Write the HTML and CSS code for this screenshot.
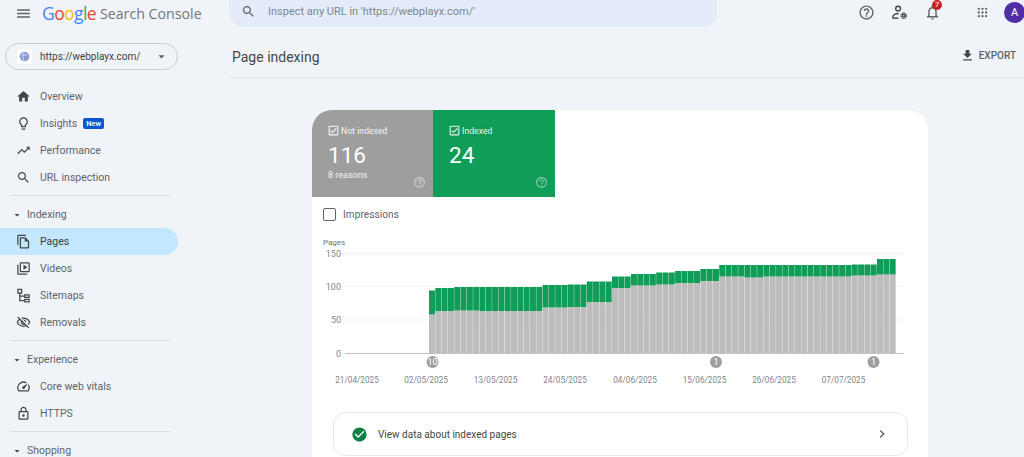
FILE: index.html
```html
<!DOCTYPE html>
<html lang="en">
<head>
    <meta charset="UTF-8">
    <meta name="viewport" content="width=device-width, initial-scale=1.0">
    <title>Page indexing - Search Console</title>
    <link rel="stylesheet" href="styles.css">
</head>
<body>
    <svg class="sprite" aria-hidden="true">
        <symbol id="i-menu" viewBox="0 0 24 24"><path d="M3 18h18v-2H3v2zm0-5h18v-2H3v2zm0-7v2h18V6H3z"/></symbol>
        <symbol id="i-search" viewBox="0 0 24 24"><path d="M15.5 14h-.79l-.28-.27C15.41 12.59 16 11.11 16 9.5 16 5.91 13.09 3 9.5 3S3 5.91 3 9.5 5.91 16 9.5 16c1.61 0 3.09-.59 4.23-1.57l.27.28v.79l5 4.99L20.49 19l-4.99-5zm-6 0C7.01 14 5 11.99 5 9.5S7.01 5 9.5 5 14 7.01 14 9.5 11.99 14 9.5 14z"/></symbol>
        <symbol id="i-help" viewBox="0 0 24 24"><path d="M11 18h2v-2h-2v2zm1-16C6.48 2 2 6.48 2 12s4.48 10 10 10 10-4.48 10-10S17.52 2 12 2zm0 18c-4.41 0-8-3.59-8-8s3.59-8 8-8 8 3.59 8 8-3.59 8-8 8zm0-14c-2.21 0-4 1.79-4 4h2c0-1.1.9-2 2-2s2 .9 2 2c0 2-3 1.75-3 5h2c0-2.25 3-2.5 3-5 0-2.21-1.79-4-4-4z"/></symbol>
        <symbol id="i-drop" viewBox="0 0 24 24"><path d="M7 10l5 5 5-5z"/></symbol>
        <symbol id="i-check" viewBox="0 0 24 24"><path d="M19 3H5c-1.1 0-2 .9-2 2v14c0 1.1.9 2 2 2h14c1.1 0 2-.9 2-2V5c0-1.1-.9-2-2-2zm0 16H5V5h14v14zM17.99 9l-1.41-1.42-6.59 6.59-2.58-2.57-1.42 1.41 4 3.99z"/></symbol>
    </svg>

    <header class="topbar">
        <div class="brand">
            <svg class="icon menu-icon"><use href="#i-menu"/></svg>
            <span class="logo"><span class="g-blue">G</span><span class="g-red">o</span><span class="g-yellow">o</span><span class="g-blue">g</span><span class="g-green">l</span><span class="g-red">e</span></span>
            <span class="product">Search Console</span>
        </div>
        <div class="searchbar">
            <svg class="icon"><use href="#i-search"/></svg>
            <span>Inspect any URL in 'https://webplayx.com/'</span>
        </div>
        <div class="top-actions">
            <svg class="icon action-icon"><use href="#i-help"/></svg>
            <svg class="icon action-icon" viewBox="0 0 24 24">
                <circle class="line" cx="10" cy="6.5" r="3.4"/>
                <path class="line" d="M2.5 20v-1.6c0-3 4.5-5 8.5-5"/>
                <path class="line" d="M2.5 20h8"/>
                <circle class="line" cx="18" cy="16.5" r="2"/>
                <circle class="gear" cx="18" cy="16.5" r="3.9"/>
            </svg>
            <div class="bell">
                <svg class="icon action-icon" viewBox="0 0 24 24"><path d="M12 22c1.1 0 2-.9 2-2h-4c0 1.1.9 2 2 2zm6-6v-5c0-3.07-1.63-5.64-4.5-6.32V4c0-.83-.67-1.5-1.5-1.5s-1.5.67-1.5 1.5v.68C7.64 5.36 6 7.92 6 11v5l-2 2v1h16v-1l-2-2zm-2 1H8v-6c0-2.48 1.51-4.5 4-4.5s4 2.02 4 4.5v6z"/></svg>
                <span class="bell-count">7</span>
            </div>
            <svg class="icon apps-icon" viewBox="0 0 24 24">
                <circle cx="4" cy="4" r="2.5"/><circle cx="12" cy="4" r="2.5"/><circle cx="20" cy="4" r="2.5"/>
                <circle cx="4" cy="12" r="2.5"/><circle cx="12" cy="12" r="2.5"/><circle cx="20" cy="12" r="2.5"/>
                <circle cx="4" cy="20" r="2.5"/><circle cx="12" cy="20" r="2.5"/><circle cx="20" cy="20" r="2.5"/>
            </svg>
            <div class="avatar">A</div>
        </div>
    </header>

    <div class="layout">
        <aside class="sidebar">
            <div class="property">
                <span class="favicon">
                    <svg viewBox="0 0 24 24"><circle class="globe" cx="12" cy="12" r="9"/><path class="globe-line" d="M12 3c-4 5-4 13 0 18M5 8c4 2 9 2 14 0"/></svg>
                </span>
                <span class="property-name">https://webplayx.com/</span>
                <svg class="icon property-caret"><use href="#i-drop"/></svg>
            </div>

            <nav>
                <a class="nav-item"><svg class="icon" viewBox="0 0 24 24"><path d="M10 20v-6h4v6h5v-8h3L12 3 2 12h3v8z"/></svg>Overview</a>
                <a class="nav-item"><svg class="icon" viewBox="0 0 24 24"><path d="M9 21c0 .55.45 1 1 1h4c.55 0 1-.45 1-1v-1H9v1zm3-19C8.14 2 5 5.14 5 9c0 2.38 1.19 4.47 3 5.74V17c0 .55.45 1 1 1h6c.55 0 1-.45 1-1v-2.26c1.81-1.27 3-3.36 3-5.74 0-3.86-3.14-7-7-7zm2.85 11.1l-.85.6V16h-4v-2.3l-.85-.6C7.8 12.16 7 10.63 7 9c0-2.76 2.24-5 5-5s5 2.24 5 5c0 1.63-.8 3.16-2.15 4.1z"/></svg>Insights<span class="new-badge">New</span></a>
                <a class="nav-item"><svg class="icon" viewBox="0 0 24 24"><path d="M16 6l2.29 2.29-4.88 4.88-4-4L2 16.59 3.41 18l6-6 4 4 6.3-6.29L22 12V6z"/></svg>Performance</a>
                <a class="nav-item"><svg class="icon"><use href="#i-search"/></svg>URL inspection</a>

                <div class="divider"></div>
                <div class="nav-group"><svg class="icon group-caret"><use href="#i-drop"/></svg>Indexing</div>
                <a class="nav-item active"><svg class="icon" viewBox="0 0 24 24"><path d="M16 1H4c-1.1 0-2 .9-2 2v14h2V3h12V1zm-1 4H8c-1.1 0-1.99.9-1.99 2L6 21c0 1.1.89 2 1.99 2H19c1.1 0 2-.9 2-2V11l-6-6zM8 21V7h6v5h5v9H8z"/></svg>Pages</a>
                <a class="nav-item"><svg class="icon" viewBox="0 0 24 24"><path d="M4 6H2v14c0 1.1.9 2 2 2h14v-2H4V6zm16-4H8c-1.1 0-2 .9-2 2v12c0 1.1.9 2 2 2h12c1.1 0 2-.9 2-2V4c0-1.1-.9-2-2-2zm0 14H8V4h12v12zM12 5.5v9l6-4.5z"/></svg>Videos</a>
                <a class="nav-item"><svg class="icon" viewBox="0 0 24 24"><path class="line" d="M3 2h6v6H3zM14 11h7v4h-7zM14 18h7v4h-7zM6 8v12h8M6 13h8"/></svg>Sitemaps</a>
                <a class="nav-item"><svg class="icon" viewBox="0 0 24 24"><path d="M12 6c3.79 0 7.17 2.13 8.82 5.5-.59 1.22-1.42 2.27-2.41 3.12l1.41 1.41c1.39-1.23 2.49-2.77 3.18-4.53C21.27 7.11 17 4 12 4c-1.27 0-2.49.2-3.64.57l1.65 1.65C10.66 6.09 11.32 6 12 6zm-1.07 1.14L13 9.21c.57.25 1.03.71 1.28 1.28l2.07 2.07c.08-.34.14-.7.14-1.07C16.5 9.01 14.48 7 12 7c-.37 0-.72.05-1.07.14zM2.01 3.87l2.68 2.68C3.06 7.83 1.77 9.53 1 11.5 2.73 15.89 7 19 12 19c1.52 0 2.98-.29 4.32-.82l3.42 3.42 1.41-1.41L3.42 2.45 2.01 3.87zm7.5 7.5l2.61 2.61c-.04.01-.08.02-.12.02-1.38 0-2.5-1.12-2.5-2.5 0-.05.01-.08.01-.13zm-3.4-3.4l1.75 1.75c-.23.55-.36 1.15-.36 1.78 0 2.48 2.02 4.5 4.5 4.5.63 0 1.23-.13 1.77-.36l.98.98c-.88.24-1.8.38-2.75.38-3.79 0-7.17-2.13-8.82-5.5.7-1.43 1.72-2.61 2.93-3.53z"/></svg>Removals</a>

                <div class="divider"></div>
                <div class="nav-group"><svg class="icon group-caret"><use href="#i-drop"/></svg>Experience</div>
                <a class="nav-item"><svg class="icon" viewBox="0 0 24 24"><path d="M20.38 8.57l-1.23 1.85a8 8 0 0 1-.22 7.58H5.07A8 8 0 0 1 15.58 6.85l1.85-1.23A10 10 0 0 0 3.35 19a2 2 0 0 0 1.72 1h13.85a2 2 0 0 0 1.74-1 10 10 0 0 0-.27-10.44zm-9.79 6.84a2 2 0 0 0 2.83 0l5.66-8.49-8.49 5.66a2 2 0 0 0 0 2.83z"/></svg>Core web vitals</a>
                <a class="nav-item"><svg class="icon" viewBox="0 0 24 24"><path d="M18 8h-1V6c0-2.76-2.24-5-5-5S7 3.24 7 6v2H6c-1.1 0-2 .9-2 2v10c0 1.1.9 2 2 2h12c1.1 0 2-.9 2-2V10c0-1.1-.9-2-2-2zM9 6c0-1.66 1.34-3 3-3s3 1.34 3 3v2H9V6zm9 14H6V10h12v10zm-6-3c1.1 0 2-.9 2-2s-.9-2-2-2-2 .9-2 2 .9 2 2 2z"/></svg>HTTPS</a>

                <div class="divider"></div>
                <div class="nav-group"><svg class="icon group-caret"><use href="#i-drop"/></svg>Shopping</div>
            </nav>
        </aside>

        <main class="content">
            <div class="page-head">
                <h1>Page indexing</h1>
                <a class="export"><svg class="icon" viewBox="0 0 24 24"><path d="M19 9h-4V3H9v6H5l7 7 7-7zM5 18v2h14v-2H5z"/></svg>EXPORT</a>
            </div>

            <section class="card">
                <div class="tabs">
                    <div class="tab tab-gray">
                        <div class="tab-label"><svg class="icon"><use href="#i-check"/></svg>Not indexed</div>
                        <div class="tab-value">116</div>
                        <div class="tab-note">8 reasons</div>
                        <svg class="icon tab-help"><use href="#i-help"/></svg>
                    </div>
                    <div class="tab tab-green">
                        <div class="tab-label"><svg class="icon"><use href="#i-check"/></svg>Indexed</div>
                        <div class="tab-value">24</div>
                        <svg class="icon tab-help"><use href="#i-help"/></svg>
                    </div>
                </div>

                <label class="impressions"><span class="checkbox"></span>Impressions</label>

                <svg class="chart" id="chart" width="616" height="162" viewBox="0 0 616 162">
                    <g class="grid">
                        <line x1="33" x2="592" y1="21.5" y2="21.5"/>
                        <line x1="33" x2="592" y1="54.5" y2="54.5"/>
                        <line x1="33" x2="592" y1="88" y2="88"/>
                    </g>
                    <line class="baseline" x1="33" x2="592" y1="121.5" y2="121.5"/>
                    <g id="bars"></g>
                    <text class="axis-title" x="11" y="13">Pages</text>
                    <g class="axis-y">
                        <text x="29" y="24.5">150</text>
                        <text x="29" y="57.5">100</text>
                        <text x="29" y="91">50</text>
                        <text x="29" y="124.5">0</text>
                    </g>
                    <g class="axis-x">
                        <text x="45" y="151">21/04/2025</text>
                        <text x="114" y="151">02/05/2025</text>
                        <text x="183.5" y="151">13/05/2025</text>
                        <text x="253" y="151">24/05/2025</text>
                        <text x="323" y="151">04/06/2025</text>
                        <text x="392.5" y="151">15/06/2025</text>
                        <text x="462" y="151">26/06/2025</text>
                        <text x="531.5" y="151">07/07/2025</text>
                    </g>
                    <g class="marker">
                        <circle cx="120.5" cy="130" r="6"/><text x="120.5" y="133.2">10</text>
                        <circle cx="404" cy="130" r="6"/><text x="404" y="133.2">1</text>
                        <circle cx="561.5" cy="130" r="6"/><text x="561.5" y="133.2">1</text>
                    </g>
                </svg>

                <a class="callout">
                    <svg class="callout-check" viewBox="0 0 24 24"><path d="M12 2C6.48 2 2 6.48 2 12s4.48 10 10 10 10-4.48 10-10S17.52 2 12 2zm-2 15l-5-5 1.41-1.41L10 14.17l7.59-7.59L19 8l-9 9z"/></svg>
                    <span class="callout-text">View data about indexed pages</span>
                    <svg class="icon callout-arrow" viewBox="0 0 24 24"><path d="M10 6L8.59 7.41 13.17 12l-4.58 4.59L10 18l6-6z"/></svg>
                </a>
            </section>
        </main>
    </div>

    <script src="chart.js"></script>
</body>
</html>
```

FILE: styles.css
```css
* {
    margin: 0;
    padding: 0;
    box-sizing: border-box;
}

html, body {
    height: 457px;
    overflow: hidden;
}

body {
    background-color: #f0f4f9;
    color: #5f6368;
    font-family: 'Roboto', sans-serif;
    font-size: 10.5px;
}

a {
    color: inherit;
    text-decoration: none;
}

.sprite {
    display: none;
}

.icon {
    width: 15px;
    height: 15px;
    fill: #444746;
    flex-shrink: 0;
}

.line {
    fill: none;
    stroke: #444746;
    stroke-width: 2;
}

.gear {
    fill: none;
    stroke: #444746;
    stroke-width: 1.6;
    stroke-dasharray: 2 1.1;
}

/* top bar */
.topbar {
    display: flex;
    height: 28px;
}

.brand {
    display: flex;
    align-items: center;
    width: 229px;
    height: 26px;
    padding-left: 15px;
    flex-shrink: 0;
}

.menu-icon {
    width: 17px;
    height: 17px;
    margin-right: 10px;
    fill: #5f6368;
}

.logo {
    font-family: 'Open Sans', sans-serif;
    font-size: 17.5px;
    letter-spacing: -0.6px;
    margin-right: 4px;
}

.g-blue { color: #4285f4; }
.g-red { color: #ea4335; }
.g-yellow { color: #fbbc05; }
.g-green { color: #34a853; }

.product {
    font-family: 'Open Sans', sans-serif;
    font-size: 14.2px;
    color: #70757a;
}

.searchbar {
    display: flex;
    align-items: center;
    gap: 12px;
    width: 488px;
    height: 27px;
    padding: 0 0 4px 12px;
    background-color: #e4ebf9;
    border-radius: 0 0 14px 14px;
    font-size: 11px;
    color: #80868b;
    flex-shrink: 0;
}

.searchbar .icon {
    fill: #5f6368;
}

.top-actions {
    display: flex;
    align-items: center;
    flex: 1;
    height: 24px;
    padding-left: 141px;
}

.action-icon {
    width: 17px;
    height: 17px;
    margin-right: 16px;
    fill: #5f6368;
}

.bell {
    position: relative;
    display: flex;
}

.bell-count {
    position: absolute;
    top: -4px;
    left: 8px;
    width: 10px;
    height: 10px;
    border-radius: 50%;
    background-color: #c5221f;
    color: white;
    font-size: 8px;
    line-height: 10px;
    text-align: center;
}

.apps-icon {
    width: 11px;
    height: 11px;
    margin-left: 20px;
    margin-right: 16px;
    fill: #5f6368;
}

.avatar {
    width: 21px;
    height: 21px;
    border-radius: 50%;
    background-color: #512da8;
    color: white;
    font-size: 11px;
    line-height: 21px;
    text-align: center;
    flex-shrink: 0;
}

/* layout */
.layout {
    display: flex;
    height: 429px;
    overflow: hidden;
}

.sidebar {
    width: 229px;
    flex-shrink: 0;
    padding-top: 15px;
}

.property {
    display: flex;
    align-items: center;
    width: 173px;
    height: 27px;
    margin: 0 0 13px 5px;
    padding-left: 11px;
    border: 1px solid #c7cbd1;
    border-radius: 14px;
    font-size: 10px;
    color: #3c4043;
}

.favicon {
    display: flex;
    align-items: center;
    justify-content: center;
    width: 15px;
    height: 15px;
    margin-right: 8px;
    background-color: white;
    border-radius: 2px;
    flex-shrink: 0;
}

.favicon svg {
    width: 13px;
    height: 13px;
}

.globe {
    fill: #8c9bd6;
}

.globe-line {
    fill: none;
    stroke: #dfe4f5;
    stroke-width: 1.5;
}

.property-name {
    flex: 1;
}

.property-caret {
    width: 15px;
    height: 15px;
    margin-right: 8px;
    fill: #5f6368;
}

.nav-item {
    display: flex;
    align-items: center;
    width: 178px;
    height: 27px;
    padding-left: 16px;
}

.nav-item .icon {
    margin-right: 9px;
}

.nav-item.active {
    background-color: #c2e7ff;
    border-radius: 0 14px 14px 0;
    color: #3c4043;
}

.new-badge {
    margin-left: 6px;
    padding: 0 3px;
    background-color: #0b57d0;
    border-radius: 2px;
    color: white;
    font-size: 7.5px;
    font-weight: 500;
    line-height: 11px;
}

.divider {
    width: 160px;
    height: 1px;
    margin: 4px 0 5px 10px;
    background-color: #d9dde2;
}

.nav-group {
    display: flex;
    align-items: center;
    height: 27px;
    padding-left: 11px;
}

.group-caret {
    width: 12px;
    height: 12px;
    margin-right: 4px;
}

/* main */
.content {
    flex: 1;
}

.page-head {
    display: flex;
    align-items: center;
    justify-content: space-between;
    height: 50px;
    padding: 9px 8px 0 3px;
    border-bottom: 1.5px solid #dfe3e8;
}

h1 {
    font-size: 14px;
    font-weight: 400;
    color: #444746;
}

.export {
    display: flex;
    align-items: center;
    gap: 4px;
    margin-bottom: 3px;
    font-size: 10px;
    font-weight: 500;
    color: #5f6368;
}

.card {
    width: 616px;
    height: 347px;
    margin: 32px 0 0 83px;
    background-color: white;
    border-radius: 20px 20px 0 0;
    overflow: hidden;
}

.tabs {
    display: flex;
    height: 87px;
}

.tab {
    position: relative;
    width: 122px;
    padding: 14px 0 0 15px;
    color: white;
}

.tab-gray {
    width: 121px;
    background-color: #9e9e9e;
}

.tab-green {
    background-color: #0f9d58;
}

.tab-label {
    display: flex;
    align-items: center;
    gap: 1px;
    font-size: 8.5px;
    letter-spacing: 0.1px;
    opacity: 0.9;
}

.tab-label .icon {
    width: 13px;
    height: 13px;
    fill: white;
}

.tab-value {
    margin: 5px 0 0 1px;
    font-size: 22.5px;
    line-height: 26px;
}

.tab-note {
    margin: 2px 0 0 1px;
    font-size: 9px;
    opacity: 0.9;
}

.tab-help {
    position: absolute;
    right: 7px;
    bottom: 8px;
    width: 13px;
    height: 13px;
    fill: white;
    opacity: 0.5;
}

.impressions {
    display: flex;
    align-items: center;
    gap: 7px;
    height: 18px;
    margin: 8px 0 0 11px;
    font-size: 10px;
    letter-spacing: 0.1px;
    color: #5f6368;
}

.checkbox {
    width: 13px;
    height: 13px;
    border: 1.5px solid #5f6368;
    border-radius: 2px;
}

/* chart */
.chart {
    display: block;
    margin-top: 9px;
    font-family: 'Roboto', sans-serif;
}

.chart text {
    fill: #80868b;
}

.chart .axis-title {
    fill: #70757a;
    font-size: 8px;
}

.axis-y text {
    font-size: 9px;
    text-anchor: end;
}

.axis-x text {
    font-size: 8.2px;
    text-anchor: middle;
}

.grid line {
    stroke: #e6e6e6;
    stroke-dasharray: 1 1;
}

.baseline {
    stroke: #c4c4c4;
}

.bar-gray {
    fill: #bdbdbd;
}

.bar-green {
    fill: #0f9d58;
}

.marker circle {
    fill: #9e9e9e;
}

.chart .marker text {
    fill: white;
    font-size: 9px;
    text-anchor: middle;
}

.callout {
    display: flex;
    align-items: center;
    width: 575px;
    height: 44px;
    margin: 18px 0 0 21px;
    padding: 0 17px;
    border: 1px solid #e6e8eb;
    border-radius: 12px;
    color: #444746;
}

.callout-check {
    width: 17px;
    height: 17px;
    margin-right: 10px;
    fill: #0f8043;
}

.callout-text {
    flex: 1;
    font-size: 10px;
}

.callout-arrow {
    width: 16px;
    height: 16px;
    fill: #5f6368;
}
```

FILE: chart.js
```js
// each run: [bars, top of gray, top of green], tops in pixels above the baseline
var runs = [
    [1, 38.5, 62.5],
    [3, 42, 65],
    [4, 42.5, 66],
    [10, 42, 66],
    [4, 45.5, 68],
    [3, 46, 68.5],
    [4, 51, 71.5],
    [3, 65, 76.5],
    [4, 67.5, 79],
    [3, 68.5, 80.5],
    [4, 70, 82],
    [3, 72, 84],
    [4, 76.5, 88],
    [3, 75.5, 88],
    [14, 76.5, 88],
    [4, 77.5, 88.5],
    [3, 78.5, 94]
];

var SVG_NS = 'http://www.w3.org/2000/svg';
var barsGroup = document.getElementById('bars');
var baseline = 121;
var pitch = 6.31;
var barX = 117;

function addRect(cls, x, top, height) {
    var rect = document.createElementNS(SVG_NS, 'rect');
    rect.setAttribute('class', cls);
    rect.setAttribute('x', x);
    rect.setAttribute('y', top);
    rect.setAttribute('width', pitch - 0.3);
    rect.setAttribute('height', height);
    barsGroup.appendChild(rect);
}

runs.forEach(function (run) {
    for (var i = 0; i < run[0]; i++) {
        addRect('bar-gray', barX, baseline - run[1], run[1]);
        addRect('bar-green', barX, baseline - run[2], run[2] - run[1]);
        barX += pitch;
    }
});
```
